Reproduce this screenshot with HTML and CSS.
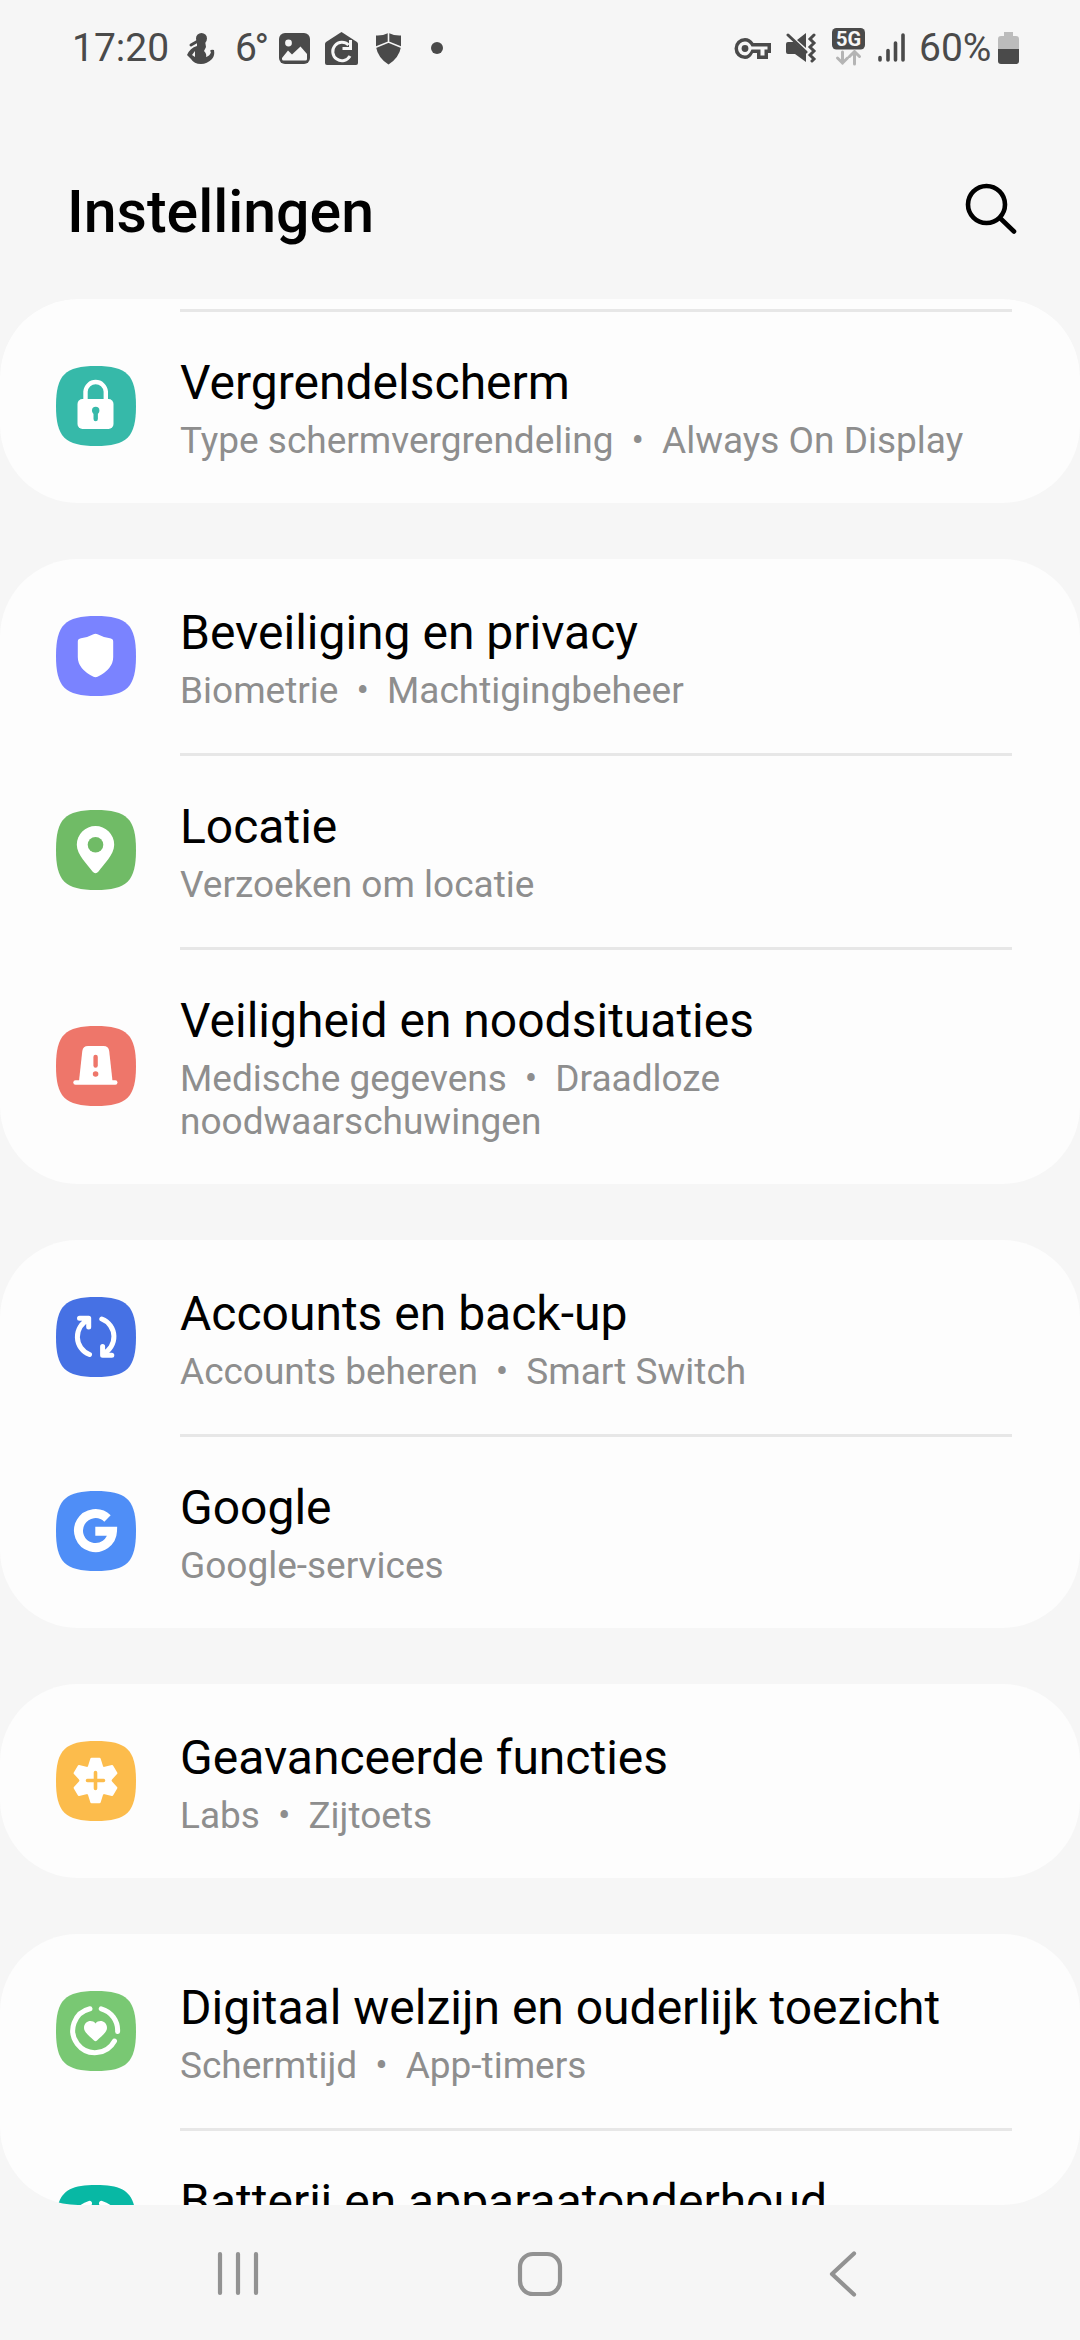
FILE: index.html
```
<!DOCTYPE html>
<html lang="nl">

<head>
    <meta charset="UTF-8">
    <meta name="viewport" content="width=device-width, initial-scale=1.0">
    <title>Instellingen</title>
    <link rel="stylesheet" href="styles.css">
</head>

<body>
    <!-- statusbalk -->
    <div class="statusbar">
        <div class="status-left">
            <span class="time">17:20</span>
            <svg class="s-person" width="28" height="40" viewBox="0 0 28 40">
                <circle cx="14.5" cy="10.500" r="5.500" />
                <path d="M10 13 18 13 19 19 17 23Q20 26 19 29Q23 28 24 24L23 23Q24 21 27 22Q28 28 25 31Q20 36 14 36Q7 36 4 31L0 27Q3 20 10 18Z" />
                <path class="line" d="M4 17 11 13" />
                <path class="cut" d="M5 27 8 23 8 29Z" />
            </svg>
            <span class="temp">6°</span>
            <svg class="s-photo" width="31" height="40" viewBox="0 0 31 40">
                <rect y="5" width="31" height="31" rx="6" />
                <circle class="light" cx="9.500" cy="15" r="3.400" />
                <path class="light" d="M3 30 9 22.500 13 26.500 21.500 18.500 28 26V31Q28 32.500 26.500 32.500H4.500Q3 32.500 3 31Z" />
            </svg>
            <svg class="s-house" width="33" height="40" viewBox="0 0 33 40">
                <path d="M16.500 4 32 14Q33 15 33 16V35Q33 37 31 37H2Q0 37 0 35V16Q0 15 1 14Z" />
                <path class="white-line" d="M23.500 17A9.200 9.200 0 1 0 25 28M25.500 12V20.500H17.500" />
            </svg>
            <svg class="s-shield" width="25" height="40" viewBox="0 0 25 40">
                <path d="M12.500 5Q19 8 25 7.500V19Q23 30 12.500 36.500Q2 30 0 19V7.500Q6 8 12.500 5Z" />
                <path class="white-line thin" d="M12.500 4V14.500M-1 19.500 12.500 14 26 19.500" />
            </svg>
            <i class="dot"></i>
        </div>
        <div class="status-right">
            <svg class="s-key" width="38" height="40" viewBox="0 0 38 40">
                <path d="M11 10Q16 10 19.500 15H37V25H34V31H23V25H19Q16 31 11 31A10.500 10.500 0 0 1 11 10Z" />
                <path class="light" d="M11 13.500Q15 13.500 17.500 18.500H33.500V21.500H30.500V27.500H26.500V21.500H17.500Q15 27.500 11 27.500A7 7 0 0 1 11 13.500Z" />
                <circle cx="11" cy="20.500" r="3.400" />
            </svg>
            <svg class="s-mute" width="31" height="40" viewBox="0 0 31 40">
                <path d="M0 16Q0 14 2 14H8L20 25V34L9 26H2Q0 26 0 24ZM20 5V20L11 12Z" />
                <path class="line" d="M2 7 20 24M28 7 24 11 28 15 24 19 28 23 24 27 28 31 26 33" />
            </svg>
            <svg class="s-5g" width="34" height="40" viewBox="0 0 34 40">
                <rect width="33" height="21.500" rx="4.500" />
                <text x="16.500" y="17.500">5G</text>
                <path class="faint" d="M10.500 24V35M5.500 30 10.500 35 15.500 30M22.500 36V24M17.500 28.500 22.500 23.500 27.500 28.500" />
            </svg>
            <svg class="s-signal" width="27" height="40" viewBox="0 0 27 40">
                <path class="bars" d="M2 29.500V32M10 22.500V32M17.500 15V32M25 7V32" />
            </svg>
            <span class="percent">60%</span>
            <svg class="s-battery" width="21" height="40" viewBox="0 0 21 40">
                <path class="empty" d="M6 4H15V8H18Q21 8 21 11V22H0V11Q0 8 3 8H6Z" />
                <path d="M0 21H21V33Q21 36 18 36H3Q0 36 0 33Z" />
            </svg>
        </div>
    </div>

    <header class="header">
        <h1>Instellingen</h1>
        <svg width="52" height="52" viewBox="0 0 52 52">
            <circle cx="21.500" cy="21.500" r="18.500" />
            <path d="M35 35 49 48.500" />
        </svg>
    </header>

    <!-- lijst met instellingen -->
    <main class="list">
        <section class="card first">
            <div class="row">
                <svg class="icon teal" width="80" height="80" viewBox="0 0 80 80">
                    <path class="tile" d="M0 40C0 9 9 0 40 0S80 9 80 40 71 80 40 80 0 71 0 40Z" />
                    <path class="stroke w4" d="M29.500 34V25.500A10.200 10.500 0 0 1 49.800 25.500V34" />
                    <rect class="fill" x="21.500" y="33" width="36" height="30" rx="5" />
                    <circle class="hole" cx="39.700" cy="44.500" r="3.700" />
                    <path class="hole-line" d="M39.700 46V53" />
                </svg>
                <div class="text">
                    <h2>Vergrendelscherm</h2>
                    <p>Type schermvergrendeling<b>•</b>Always On Display</p>
                </div>
            </div>
        </section>

        <section class="card">
            <div class="row">
                <svg class="icon violet" width="80" height="80" viewBox="0 0 80 80">
                    <path class="tile" d="M0 40C0 9 9 0 40 0S80 9 80 40 71 80 40 80 0 71 0 40Z" />
                    <path class="fill" d="M37.500 18.300Q39.500 17.300 41.500 18.300Q47 21.300 54 22.300Q57.200 22.800 57.200 25.500V41Q57.200 53 41.500 60.800Q39.500 61.700 37.500 60.800Q21.800 53 21.800 41V25.500Q21.800 22.800 25 22.300Q32 21.300 37.500 18.300Z" />
                </svg>
                <div class="text">
                    <h2>Beveiliging en privacy</h2>
                    <p>Biometrie<b>•</b>Machtigingbeheer</p>
                </div>
            </div>
            <div class="row">
                <svg class="icon green" width="80" height="80" viewBox="0 0 80 80">
                    <path class="tile" d="M0 40C0 9 9 0 40 0S80 9 80 40 71 80 40 80 0 71 0 40Z" />
                    <path class="fill" d="M39.500 16A18.700 18.700 0 0 1 58.200 34.700C58.200 45 47.500 54 42.500 61.500Q39.500 65 36.500 61.500C31.500 54 20.800 45 20.800 34.700A18.700 18.700 0 0 1 39.500 16Z" />
                    <circle class="hole" cx="39.500" cy="34.700" r="7.800" />
                </svg>
                <div class="text">
                    <h2>Locatie</h2>
                    <p>Verzoeken om locatie</p>
                </div>
            </div>
            <div class="row">
                <svg class="icon red" width="80" height="80" viewBox="0 0 80 80">
                    <path class="tile" d="M0 40C0 9 9 0 40 0S80 9 80 40 71 80 40 80 0 71 0 40Z" />
                    <path class="fill" d="M32 20H47.500Q52.500 20 53.200 25L56.500 55H23L26.300 25Q27 20 32 20Z" />
                    <path class="stroke w4" d="M19.500 56.500H59.300" />
                    <path class="hole-line" d="M39.600 31V39.500" />
                    <circle class="hole" cx="39.600" cy="48" r="2.800" />
                </svg>
                <div class="text">
                    <h2>Veiligheid en noodsituaties</h2>
                    <p>Medische gegevens<b>•</b>Draadloze<br>noodwaarschuwingen</p>
                </div>
            </div>
        </section>

        <section class="card">
            <div class="row">
                <svg class="icon blue" width="80" height="80" viewBox="0 0 80 80">
                    <path class="tile" d="M0 40C0 9 9 0 40 0S80 9 80 40 71 80 40 80 0 71 0 40Z" />
                    <path class="stroke w5" d="M33.500 57.500A19 19 0 0 1 32.500 22.500M23.500 21.300H32.700V30" />
                    <path class="stroke w5" d="M45.800 22A19 19 0 0 1 46.800 57M55.800 58.200H46.600V49.500" />
                </svg>
                <div class="text">
                    <h2>Accounts en back-up</h2>
                    <p>Accounts beheren<b>•</b>Smart Switch</p>
                </div>
            </div>
            <div class="row">
                <svg class="icon google" width="80" height="80" viewBox="0 0 80 80">
                    <path class="tile" d="M0 40C0 9 9 0 40 0S80 9 80 40 71 80 40 80 0 71 0 40Z" />
                    <path class="stroke w9" d="M51.500 27.500A17 17 0 1 0 56.500 40.200H39.300" />
                </svg>
                <div class="text">
                    <h2>Google</h2>
                    <p>Google-services</p>
                </div>
            </div>
        </section>

        <section class="card">
            <div class="row">
                <svg class="icon orange" width="80" height="80" viewBox="0 0 80 80">
                    <path class="tile" d="M0 40C0 9 9 0 40 0S80 9 80 40 71 80 40 80 0 71 0 40Z" />
                    <circle class="fill" cx="39.500" cy="39.500" r="16" />
                    <g class="teeth">
                        <path d="M35.500 18H43.500L46 26V53L43.500 61H35.500L33 53V26Z" />
                        <path transform="rotate(60 39.500 39.500)" d="M35.500 18H43.500L46 26V53L43.500 61H35.500L33 53V26Z" />
                        <path transform="rotate(120 39.500 39.500)" d="M35.500 18H43.500L46 26V53L43.500 61H35.500L33 53V26Z" />
                    </g>
                    <path class="hole-line thin" d="M31.500 39.500H47.500M39.500 31.500V47.500" />
                </svg>
                <div class="text">
                    <h2>Geavanceerde functies</h2>
                    <p>Labs<b>•</b>Zijtoets</p>
                </div>
            </div>
        </section>

        <section class="card">
            <div class="row">
                <svg class="icon lime" width="80" height="80" viewBox="0 0 80 80">
                    <path class="tile" d="M0 40C0 9 9 0 40 0S80 9 80 40 71 80 40 80 0 71 0 40Z" />
                    <path class="stroke w5" d="M34 17.800A22.200 22.200 0 1 0 58.500 50M45.200 17.800A22.200 22.200 0 0 1 61.600 40.500" />
                    <path class="fill" d="M39.500 32.500C43 28 51 30 51 37C51 41.500 44.500 46 41 49.500Q39.500 51 38 49.500C34.500 46 28 41.500 28 37C28 30 36 28 39.500 32.500Z" />
                </svg>
                <div class="text">
                    <h2>Digitaal welzijn en ouderlijk toezicht</h2>
                    <p>Schermtijd<b>•</b>App-timers</p>
                </div>
            </div>
            <div class="row">
                <svg class="icon sea" width="80" height="80" viewBox="0 0 80 80">
                    <path class="tile" d="M0 40C0 9 9 0 40 0S80 9 80 40 71 80 40 80 0 71 0 40Z" />
                    <path class="stroke w5" d="M33.500 18.300A22.200 22.200 0 0 0 33.500 61M45.500 18.300A22.200 22.200 0 0 1 45.500 61" />
                </svg>
                <div class="text">
                    <h2>Batterij en apparaatonderhoud</h2>
                </div>
            </div>
        </section>
    </main>

    <!-- navigatiebalk -->
    <nav class="navbar">
        <svg width="46" height="46" viewBox="0 0 46 46">
            <path d="M5 3V42M23 3V42M41 3V42" />
        </svg>
        <svg width="48" height="48" viewBox="0 0 48 48">
            <rect x="4" y="4" width="40" height="40" rx="13" />
        </svg>
        <svg width="39" height="48" viewBox="-9 0 39 48">
            <path d="M26 3.500 4 24 26 44.500" />
        </svg>
    </nav>
</body>

</html>
```

FILE: styles.css
```
body {
    margin: 0;
    width: 1080px;
    height: 2340px;
    overflow: hidden;
    display: flex;
    flex-direction: column;
    background-color: #f6f6f6;
    font-family: Roboto, sans-serif;
    color: #000;
}

svg {
    display: block;
    flex: none;
}

/* statusbalk */
.statusbar {
    height: 68px;
    padding: 28px 61px 0 72px;
    box-sizing: border-box;
    display: flex;
    justify-content: space-between;
    color: #4a4a4a;
    font-size: 39px;
    line-height: 40px;
    white-space: nowrap;
}

.statusbar svg {
    fill: #4a4a4a;
}

.status-left,
.status-right {
    display: flex;
}

.time {
    width: 115px;
}

.temp {
    width: 44px;
    margin-left: 20px;
    letter-spacing: -2.5px;
}

.s-house {
    margin-left: 15px;
}

.s-shield {
    margin-left: 18px;
}

.dot {
    width: 12px;
    height: 12px;
    margin: 14px 0 0 30px;
    border-radius: 50%;
    background-color: #4a4a4a;
}

.s-mute {
    margin-left: 14px;
}

.s-5g {
    margin-left: 15px;
}

.s-signal {
    margin-left: 12px;
}

.percent {
    width: 79px;
    margin-left: 14px;
}

.statusbar .light,
.statusbar .cut {
    fill: #f6f6f6;
}

.statusbar .line,
.statusbar .bars {
    fill: none;
    stroke: #4a4a4a;
    stroke-width: 3;
    stroke-linecap: round;
}

.statusbar .bars {
    stroke-width: 3.6;
}

.statusbar .white-line {
    fill: none;
    stroke: #f6f6f6;
    stroke-width: 3;
}

.statusbar .thin {
    stroke-width: 1.6;
}

.statusbar .faint {
    fill: none;
    stroke: #b4b4b4;
    stroke-width: 3;
    stroke-linecap: round;
}

.statusbar .empty {
    fill: #bcbcbc;
}

.s-5g text {
    fill: #f6f6f6;
    font-size: 20px;
    font-weight: bold;
    text-anchor: middle;
}

/* titel */
.header {
    height: 231px;
    padding: 0 63px 0 67px;
    box-sizing: border-box;
    display: flex;
    justify-content: space-between;
}

.header h1 {
    margin: 109px 0 0;
    font-size: 59px;
    font-weight: 500;
    line-height: 70px;
}

.header svg {
    margin-top: 115px;
    fill: none;
    stroke: #000;
    stroke-width: 4.6;
    stroke-linecap: round;
}

/* lijst */
.list {
    height: 1906px;
    flex: none;
    overflow: hidden;
    border-radius: 78px;
    display: flex;
    flex-direction: column;
    gap: 56px;
}

.card {
    flex: none;
    border-radius: 78px;
    background-color: #fdfdfd;
}

.card.first {
    padding-top: 10px;
}

.row {
    min-height: 194px;
    padding: 0 68px 0 56px;
    box-sizing: border-box;
    display: flex;
    align-items: center;
    gap: 44px;
}

.text {
    flex: 1;
    align-self: stretch;
    padding: 43px 0 41px;
}

.row + .row .text,
.first .text {
    border-top: 3px solid #e7e7e7;
    padding-top: 40px;
}

.text h2 {
    margin: 0;
    font-size: 48px;
    font-weight: 400;
    line-height: 62px;
    white-space: nowrap;
}

.text p {
    margin: 5px 0 0;
    font-size: 37px;
    line-height: 43px;
    color: #8e8e8e;
}

.text b {
    margin: 0 18px;
    font-weight: 400;
}

.icon .fill {
    fill: #fff;
}

.icon .stroke {
    fill: none;
    stroke: #fff;
    stroke-linecap: round;
    stroke-linejoin: round;
}

.icon .w4 {
    stroke-width: 4.4;
}

.icon .w5 {
    stroke-width: 5;
}

.icon .w9 {
    stroke-width: 9;
    stroke-linecap: butt;
    stroke-linejoin: miter;
}

.icon .hole,
.icon .tile {
    fill: currentColor;
}

.icon .hole-line {
    fill: none;
    stroke: currentColor;
    stroke-width: 4.4;
    stroke-linecap: round;
}

.icon .thin {
    stroke-width: 3.6;
}

.teeth {
    fill: #fff;
    stroke: #fff;
    stroke-width: 2.5;
    stroke-linejoin: round;
}

.teal {
    color: #36b9a9;
}

.violet {
    color: #7a83ff;
}

.green {
    color: #70bb66;
}

.red {
    color: #ee766a;
}

.blue {
    color: #4671e4;
}

.google {
    color: #4f8ef7;
}

.orange {
    color: #fcbc4c;
}

.lime {
    color: #79c873;
}

.sea {
    color: #08b8a4;
}

/* navigatiebalk */
.navbar {
    flex: 1;
    padding: 0 222px 0 215px;
    display: flex;
    align-items: center;
    justify-content: space-between;
}

.navbar svg {
    margin-top: 3px;
    fill: none;
    stroke: #929292;
    stroke-width: 4.2;
    stroke-linecap: round;
    stroke-linejoin: round;
}
```
